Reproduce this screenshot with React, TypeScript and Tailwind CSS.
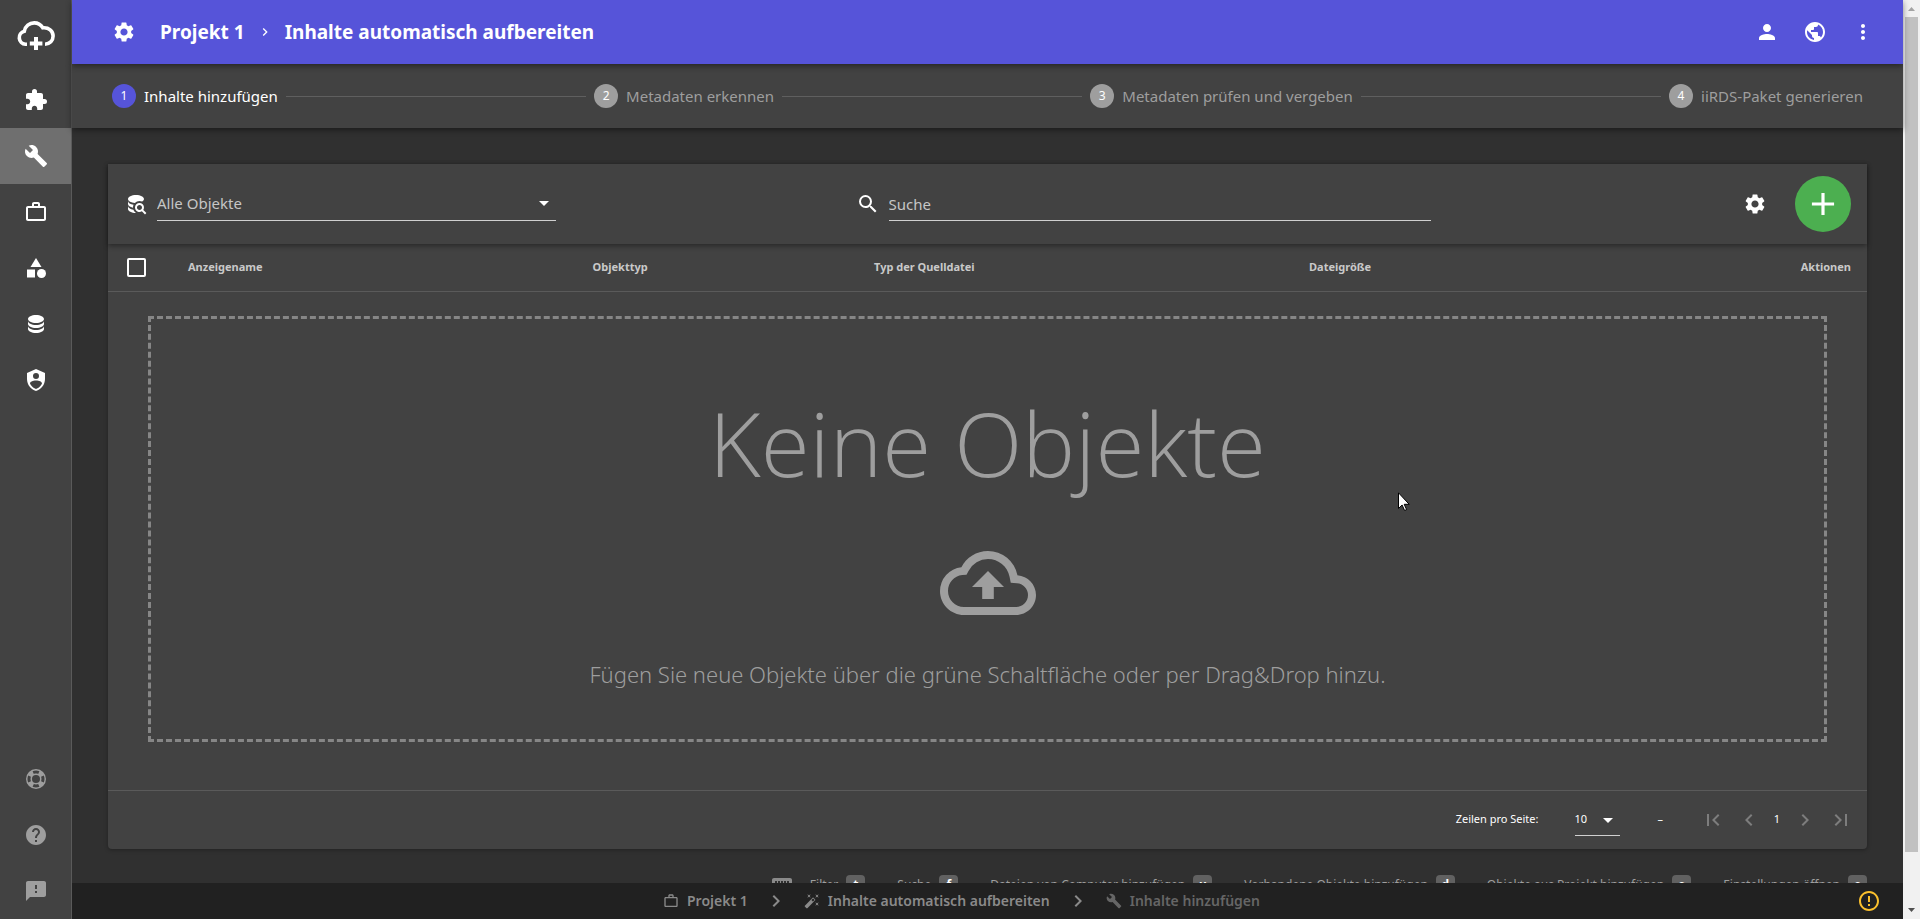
import { FC, ReactNode } from 'react';
import {
  MdAdd,
  MdArrowDropDown,
  MdAutoFixHigh,
  MdBuild,
  MdCategory,
  MdChevronLeft,
  MdChevronRight,
  MdErrorOutline,
  MdExtension,
  MdFeedback,
  MdFirstPage,
  MdHelp,
  MdKeyboard,
  MdLastPage,
  MdMoreVert,
  MdOutlineCloudUpload,
  MdPerson,
  MdPublic,
  MdSearch,
  MdSettings,
  MdWorkOutline,
} from 'react-icons/md';

const DatabaseIcon: FC = () => (
  <svg viewBox="0 0 24 24" className="size-6" fill="currentColor">
    <path d="M12,3C7.58,3 4,4.79 4,7C4,9.21 7.58,11 12,11C16.42,11 20,9.21 20,7C20,4.79 16.42,3 12,3M4,9V12C4,14.21 7.58,16 12,16C16.42,16 20,14.21 20,12V9C20,11.21 16.42,13 12,13C7.58,13 4,11.21 4,9M4,14V17C4,19.21 7.58,21 12,21C16.42,21 20,19.21 20,17V14C20,16.21 16.42,18 12,18C7.58,18 4,16.21 4,14Z" />
  </svg>
);

const DatabaseSearchIcon: FC = () => (
  <svg viewBox="0 0 24 24" className="size-6 shrink-0" fill="currentColor">
    <path d="M18.68,12.32C16.92,10.56 14.07,10.57 12.32,12.33C10.56,14.09 10.56,16.94 12.32,18.69C13.81,20.17 16.11,20.43 17.89,19.32L21,22.39L22.39,21L19.3,17.89C20.43,16.12 20.17,13.8 18.68,12.32M17.27,17.27C16.29,18.25 14.71,18.24 13.73,17.27C12.76,16.29 12.76,14.71 13.74,13.73C14.71,12.76 16.29,12.76 17.27,13.73C18.24,14.71 18.24,16.29 17.27,17.27M10.9,20.1C10.25,19.44 9.74,18.65 9.42,17.78C6.27,17.25 4,15.76 4,14V17C4,19.21 7.58,21 12,21V21C11.6,20.74 11.23,20.44 10.9,20.1M4,9V12C4,13.68 6.07,15.12 9,15.7C9,15.63 9,15.57 9,15.5C9,14.57 9.2,13.65 9.58,12.81C6.34,12.3 4,10.79 4,9M12,3C7.58,3 4,4.79 4,7C4,9 7,10.68 10.85,11H10.9C12.1,9.74 13.76,9 15.5,9C16.41,9 17.31,9.19 18.14,9.56C19.17,9.09 19.87,8.12 20,7C20,4.79 16.42,3 12,3Z" />
  </svg>
);

const ShieldAccountIcon: FC = () => (
  <svg viewBox="0 0 24 24" className="size-6" fill="currentColor">
    <path d="M12,1L3,5V11C3,16.55 6.84,21.74 12,23C17.16,21.74 21,16.55 21,11V5L12,1M12,5A3,3 0 0,1 15,8A3,3 0 0,1 12,11A3,3 0 0,1 9,8A3,3 0 0,1 12,5M17.13,17C15.92,18.85 14.11,20.24 12,20.92C9.89,20.24 8.08,18.85 6.87,17C6.53,16.5 6.24,16 6,15.47C6,13.82 8.71,12.47 12,12.47C15.29,12.47 18,13.79 18,15.47C17.76,16 17.47,16.5 17.13,17Z" />
  </svg>
);

const LifebuoyIcon: FC = () => (
  <svg viewBox="0 0 24 24" className="size-6" fill="currentColor">
    <path d="M19.79,15.41C20.74,13.24 20.74,10.75 19.79,8.59L17.05,9.83C17.65,11.21 17.65,12.78 17.06,14.17L19.79,15.41M15.42,4.21C13.25,3.26 10.76,3.26 8.59,4.21L9.83,6.94C11.22,6.35 12.79,6.35 14.18,6.95L15.42,4.21M4.21,8.58C3.26,10.76 3.26,13.24 4.21,15.42L6.95,14.17C6.35,12.79 6.35,11.21 6.95,9.82L4.21,8.58M8.59,19.79C10.76,20.74 13.25,20.74 15.42,19.78L14.18,17.05C12.8,17.65 11.22,17.65 9.84,17.06L8.59,19.79M12,2A10,10 0 0,1 22,12A10,10 0 0,1 12,22A10,10 0 0,1 2,12A10,10 0 0,1 12,2M12,8A4,4 0 0,0 8,12A4,4 0 0,0 12,16A4,4 0 0,0 16,12A4,4 0 0,0 12,8Z" />
  </svg>
);

const Logo: FC = () => (
  <svg viewBox="0 0 38 30" className="h-[30px] w-[38px]" fill="none" stroke="currentColor" strokeWidth="3.6">
    <path d="M10 23.2H8.5A6.6 6.6 0 0 1 7.3 10.2C8.2 5.2 12.4 1.9 17.2 1.9c3.700 0 6.600 1.800 8.600 4.900 6-.6 10.300 3.200 10.300 8.200 0 4.600-3.300 8.100-8.100 8.200" />
    <path d="M19 16v13M12.8 22.500h12.600" strokeWidth="4" />
  </svg>
);

type NavItemProps = {
  label: string;
  active?: boolean;
  children: ReactNode;
};

const NavItem: FC<NavItemProps> = ({ label, active, children }) => (
  <a
    href="#"
    aria-label={label}
    className={`flex h-14 items-center justify-center ${active ? 'bg-[#6f6f6f]' : 'hover:bg-[#4d4d4d]'}`}
  >
    {children}
  </a>
);

const Sidebar: FC = () => (
  <nav className="flex w-[72px] shrink-0 flex-col border-r border-[#5a5a5a] bg-[#424242] text-white">
    <a href="#" aria-label="Start" className="flex h-[72px] items-center justify-center">
      <Logo />
    </a>
    <NavItem label="Module"><MdExtension size={24} /></NavItem>
    <NavItem label="Werkzeuge" active><MdBuild size={24} /></NavItem>
    <NavItem label="Projekte"><MdWorkOutline size={24} /></NavItem>
    <NavItem label="Kategorien"><MdCategory size={24} /></NavItem>
    <NavItem label="Datenbank"><DatabaseIcon /></NavItem>
    <NavItem label="Benutzerrechte"><ShieldAccountIcon /></NavItem>
    <div className="mt-auto text-[#9e9e9e]">
      <NavItem label="Support"><LifebuoyIcon /></NavItem>
      <NavItem label="Hilfe"><MdHelp size={24} /></NavItem>
      <NavItem label="Feedback"><MdFeedback size={24} /></NavItem>
    </div>
  </nav>
);

const Header: FC = () => (
  <header className="relative z-20 flex h-16 shrink-0 items-center bg-[#5654d9] pr-7 pl-10 text-white shadow-[0_2px_6px_rgba(0,0,0,0.45)]">
    <button type="button" aria-label="Einstellungen"><MdSettings size={24} /></button>
    <h1 className="ml-6 flex items-center text-[19px] font-bold">
      <a href="#">Projekt 1</a>
      <MdChevronRight size={16} className="mx-3" />
      <span>Inhalte automatisch aufbereiten</span>
    </h1>
    <div className="ml-auto flex gap-6">
      <button type="button" aria-label="Profil"><MdPerson size={24} /></button>
      <button type="button" aria-label="Sprache"><MdPublic size={24} /></button>
      <button type="button" aria-label="Mehr"><MdMoreVert size={24} /></button>
    </div>
  </header>
);

const steps = [
  'Inhalte hinzufügen',
  'Metadaten erkennen',
  'Metadaten prüfen und vergeben',
  'iiRDS-Paket generieren',
];

const Stepper: FC = () => (
  <ol className="relative z-10 flex h-16 shrink-0 items-center bg-[#424242] px-10 shadow-[0_2px_6px_rgba(0,0,0,0.45)]">
    {steps.map((step, index) => (
      <li key={step} className={`flex items-center ${index > 0 ? 'flex-auto' : ''}`}>
        {index > 0 && <span className="mx-2 h-px flex-1 bg-[#5f5f5f]" />}
        <span
          className={`mr-2 flex size-6 items-center justify-center rounded-full text-xs text-white ${
            index === 0 ? 'bg-[#5654d9]' : 'bg-[#9e9e9e]'
          }`}
        >
          {index + 1}
        </span>
        <span className={`whitespace-nowrap text-[15px] ${index === 0 ? 'text-white' : 'text-[#9e9e9e]'}`}>{step}</span>
      </li>
    ))}
  </ol>
);

const Toolbar: FC = () => (
  <div className="relative flex h-20 items-center justify-between px-4 shadow-[0_2px_5px_rgba(0,0,0,0.4)]">
    <div className="flex w-1/4 items-center gap-[9px]">
      <DatabaseSearchIcon />
      <div className="relative flex-1">
        <select
          aria-label="Filter"
          className="block h-[34px] w-full appearance-none border-b border-[#d0d0d0] bg-transparent text-[15px] text-[#c6c6c6] outline-none"
        >
          <option>Alle Objekte</option>
        </select>
        <MdArrowDropDown size={24} className="pointer-events-none absolute top-1 right-0 text-white" />
      </div>
    </div>
    <label className="flex w-1/3 items-center gap-[9px]">
      <MdSearch size={24} className="shrink-0" />
      <input
        type="text"
        aria-label="Suche"
        placeholder="Suche"
        className="h-[34px] min-w-0 flex-1 border-b border-[#d0d0d0] bg-transparent text-[15px] outline-none placeholder:text-[#c6c6c6]"
      />
    </label>
    <div className="flex items-center gap-4">
      <button type="button" aria-label="Tabelle anpassen" className="flex size-12 items-center justify-center">
        <MdSettings size={24} />
      </button>
      <button
        type="button"
        aria-label="Objekt hinzufügen"
        className="flex size-14 items-center justify-center rounded-full bg-[#4caf50]"
      >
        <MdAdd size={38} />
      </button>
    </div>
  </div>
);

const ObjectTable: FC = () => (
  <table className="w-full table-fixed text-left text-[11px] text-[#c9c9c9]">
    <thead>
      <tr className="h-[47px] border-b border-[#5a5a5a]">
        <th className="w-20 pl-[19px]">
          <input
            type="checkbox"
            aria-label="Alle auswählen"
            className="block size-[19px] appearance-none rounded-xs border-2 border-white"
          />
        </th>
        <th className="w-[23%]">Anzeigename</th>
        <th className="w-[16%]">Objekttyp</th>
        <th className="w-[435px]">Typ der Quelldatei</th>
        <th>Dateigröße</th>
        <th className="pr-4 text-right">Aktionen</th>
      </tr>
    </thead>
  </table>
);

const DropZone: FC = () => (
  <div className="px-10 pt-6 pb-12">
    <div className="flex h-[426px] flex-col items-center border-[3px] border-dashed border-[#868686] pt-14 font-light text-[#9e9e9e]">
      <h2 className="font-['Open_Sans',sans-serif] text-[89px] leading-[136px]">Keine Objekte</h2>
      <MdOutlineCloudUpload size={96} className="mt-6" />
      <p className="mt-[27px] text-[22px] leading-8">
        Fügen Sie neue Objekte über die grüne Schaltfläche oder per Drag&amp;Drop hinzu.
      </p>
    </div>
  </div>
);

const Pagination: FC = () => (
  <div className="flex h-[59px] items-center justify-end border-t border-[#5a5a5a] pr-3.5 text-[11px] text-white">
    <label htmlFor="page-size">Zeilen pro Seite:</label>
    <div className="relative ml-9">
      <select
        id="page-size"
        className="block h-8 w-[45px] appearance-none border-b border-[#d0d0d0] bg-transparent outline-none"
      >
        <option>10</option>
      </select>
      <MdArrowDropDown size={24} className="pointer-events-none absolute top-1 right-0" />
    </div>
    <span className="mx-[38px]">–</span>
    <div className="flex items-center gap-3 text-[#7d7d7d]">
      <button type="button" aria-label="Erste Seite"><MdFirstPage size={24} /></button>
      <button type="button" aria-label="Vorherige Seite"><MdChevronLeft size={24} /></button>
      <span className="w-2 text-center text-white">1</span>
      <button type="button" aria-label="Nächste Seite"><MdChevronRight size={24} /></button>
      <button type="button" aria-label="Letzte Seite"><MdLastPage size={24} /></button>
    </div>
  </div>
);

const shortcuts = [
  { label: 'Filter', shortcut: 't' },
  { label: 'Suche', shortcut: 'f' },
  { label: 'Dateien von Computer hinzufügen', shortcut: 'u' },
  { label: 'Vorhandene Objekte hinzufügen', shortcut: 'd' },
  { label: 'Objekte aus Projekt hinzufügen', shortcut: 'o' },
  { label: 'Einstellungen öffnen', shortcut: 'e' },
];

const ShortcutHints: FC = () => (
  <div className="mt-6 flex items-center justify-end gap-8 text-xs text-[#9e9e9e]">
    <MdKeyboard size={24} className="-mr-4 text-[#8a8a8a]" />
    {shortcuts.map(({ label, shortcut }) => (
      <span key={label} className="flex items-center gap-2 whitespace-nowrap">
        {label}
        <kbd className="flex h-5 w-[19px] items-center justify-center rounded-sm bg-[#616161] font-['Noto_Sans',sans-serif] text-xs font-bold text-white">
          {shortcut}
        </kbd>
      </span>
    ))}
  </div>
);

const Breadcrumbs: FC = () => (
  <footer className="z-10 flex h-9 shrink-0 items-center bg-[#212121] text-sm font-semibold text-[#8a8a8a]">
    <div className="flex flex-1 items-center justify-center">
      <a href="#" className="flex items-center gap-2"><MdWorkOutline size={16} />Projekt 1</a>
      <MdChevronRight size={24} className="mx-4" />
      <a href="#" className="flex items-center gap-2"><MdAutoFixHigh size={16} />Inhalte automatisch aufbereiten</a>
      <MdChevronRight size={24} className="mx-4" />
      <span className="flex items-center gap-2 text-[#666666]"><MdBuild size={16} />Inhalte hinzufügen</span>
    </div>
    <button type="button" aria-label="Warnungen" className="mr-[22px] ml-1.5 text-[#fbc02d]">
      <MdErrorOutline size={24} />
    </button>
  </footer>
);

const Scrollbar: FC = () => (
  <div className="flex w-[17px] shrink-0 flex-col items-center bg-[#f1f1f1]">
    <svg viewBox="0 0 17 17" className="h-[17px] w-[17px]"><path d="M5 11h7L8.500 7z" fill="#a3a3a3" /></svg>
    <div className="w-[13px] flex-1 bg-[#c1c1c1]" />
    <div className="h-[50px]" />
    <svg viewBox="0 0 17 17" className="h-[17px] w-[17px]"><path d="M5 6h7L8.500 10z" fill="#505050" /></svg>
  </div>
);

const Cursor: FC = () => (
  <svg viewBox="0 0 12 19" className="pointer-events-none absolute top-[492px] left-[1398px] h-[19px] w-3">
    <path d="M.5.800v15.700l3.600-3.500 2.500 5.500 2-.9-2.400-5.300h5z" fill="#fff" stroke="#000" />
  </svg>
);

export default function App() {
  return (
    <div className="relative flex h-screen overflow-hidden bg-[#303030] font-['Noto_Sans',sans-serif] text-white">
      <Sidebar />
      <div className="flex min-w-0 flex-1 flex-col">
        <Header />
        <Stepper />
        <main className="min-h-0 flex-1 overflow-hidden px-9 pt-9">
          <section className="rounded-b bg-[#424242] shadow-[0_1px_4px_rgba(0,0,0,0.3)]">
            <Toolbar />
            <ObjectTable />
            <DropZone />
            <Pagination />
          </section>
          <ShortcutHints />
        </main>
        <Breadcrumbs />
      </div>
      <Scrollbar />
      <Cursor />
    </div>
  );
}
